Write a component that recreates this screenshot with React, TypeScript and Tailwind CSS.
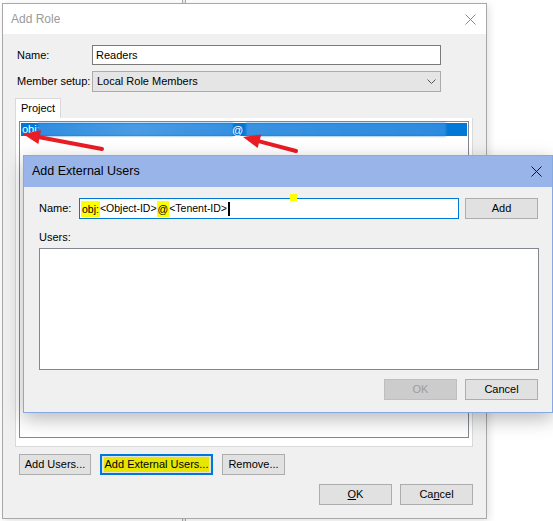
import { ReactNode } from "react";

const font = { fontFamily: '"Liberation Sans", Arial, sans-serif' };

function WinButton({ children, className = "", disabled = false }: { children: ReactNode; className?: string; disabled?: boolean }) {
  return (
    <div
      className={`h-[21px] flex items-center justify-center border text-[11px] ${
        disabled ? "bg-[#cccccc] border-[#bfbfbf] text-[#9d9d9d]" : "bg-[#e1e1e1] border-[#adadad] text-black"
      } ${className}`}
    >
      {children}
    </div>
  );
}

function CloseX({ color }: { color: string }) {
  return (
    <svg width="11" height="11" viewBox="0 0 11 11">
      <path d="M0.5 0.5 L10.5 10.5 M10.5 0.5 L0.5 10.5" stroke={color} strokeWidth="1" />
    </svg>
  );
}

function Arrow({ x1, y1, x2, y2 }: { x1: number; y1: number; x2: number; y2: number }) {
  const a = Math.atan2(y2 - y1, x2 - x1);
  const len = 17;
  const w = 7;
  const bx = x2 - Math.cos(a) * len;
  const by = y2 - Math.sin(a) * len;
  const p1 = `${bx + Math.sin(a) * w},${by - Math.cos(a) * w}`;
  const p2 = `${bx - Math.sin(a) * w},${by + Math.cos(a) * w}`;
  return (
    <g>
      <line x1={x1} y1={y1} x2={bx} y2={by} stroke="#ea1c24" strokeWidth="4" strokeLinecap="round" />
      <polygon points={`${x2},${y2} ${p1} ${p2}`} fill="#ea1c24" />
    </g>
  );
}

export default function App() {
  return (
    <div className="relative w-[553px] h-[521px] bg-white overflow-hidden" style={font}>
      {/* window edge behind */}
      <div className="absolute left-[182px] top-0 h-full w-[4px] border-l border-r border-[#a9a9a9] bg-[#f0f0f0]" />

      {/* Add Role dialog */}
      <div className="absolute left-[2px] top-[3px] w-[485px] h-[516px] border border-[#a8a8a8] bg-[#f0f0f0] flex flex-col shadow-[2px_2px_8px_rgba(0,0,0,0.12)]">
        <div className="h-[30px] bg-white flex items-center justify-between pl-[8px] pr-[10px] shrink-0">
          <span className="text-[12px] text-[#9a9a9a]">Add Role</span>
          <CloseX color="#8a8a8a" />
        </div>

        <div className="flex flex-col pl-[12px] pr-[13px] pt-[11px]">
          <div className="grid grid-cols-[77px_349px] gap-y-[6px] items-center">
            <span className="text-[11px] pl-[2px]">Name:</span>
            <div className="h-[20px] bg-white border border-[#7a7a7a] flex items-center px-[3px] text-[11px]">Readers</div>
            <span className="text-[11px] pl-[2px]">Member setup:</span>
            <div className="h-[21px] bg-[#e5e5e5] border border-[#acacac] flex items-center justify-between px-[4px] text-[11px]">
              <span>Local Role Members</span>
              <svg width="9" height="6" viewBox="0 0 9 6">
                <path d="M0.5 0.5 L4.5 4.5 L8.5 0.5" stroke="#555" fill="none" strokeWidth="1" />
              </svg>
            </div>
          </div>

          <div className="mt-[6px] flex">
            <div className="h-[20px] w-[46px] bg-white border border-b-0 border-[#d9d9d9] flex items-center justify-center text-[11px]">
              Project
            </div>
          </div>
          <div className="h-[329px] w-[458px] bg-white border border-[#d9d9d9] border-t-0 px-[3px] pt-[3px] pb-[8px] flex">
            <div className="flex-1 border border-[#828790] bg-white p-[1px]">
              <div className="h-[13px] bg-[#0078d7] flex items-center text-white text-[11px] relative">
                <span className="pl-[1px]">obj:</span>
                <div className="absolute left-[17px] top-0 h-full w-[195px] bg-gradient-to-r from-[#2f8de0] via-[#4a9be4] to-[#3590e1] blur-[1px]" />
                <span className="absolute left-[211px] top-[-1px]">@</span>
                <div className="absolute left-[225px] top-0 h-full w-[200px] bg-gradient-to-r from-[#3a92e1] to-[#2d8bdf] blur-[1px]" />
              </div>
            </div>
          </div>

          <div className="flex mt-[7px] pl-[4px] gap-[9px]">
            <WinButton className="w-[72px]">Add Users...</WinButton>
            <div className="w-[113px] h-[21px] border-2 border-[#0078d7] bg-[#e1e1e1] flex items-center justify-center">
              <span className="bg-[#e6e600] px-[1px] text-[11px] leading-[15px]">Add External Users...</span>
            </div>
            <WinButton className="w-[63px]">Remove...</WinButton>
          </div>

          <div className="flex justify-end mt-[9px] gap-[8px]">
            <WinButton className="w-[73px]"><span><span className="underline">O</span>K</span></WinButton>
            <WinButton className="w-[73px]"><span>Ca<span className="underline">n</span>cel</span></WinButton>
          </div>
        </div>
      </div>

      {/* arrows */}
      <svg className="absolute left-0 top-0" width="553" height="521">
        <Arrow x1={102} y1={149} x2={23} y2={134} />
        <Arrow x1={296} y1={151} x2={243} y2={137} />
      </svg>

      {/* Add External Users dialog */}
      <div className="absolute left-[23px] top-[155px] w-[530px] h-[258px] border border-[#86a8e3] bg-[#f0f0f0] flex flex-col shadow-[0_6px_18px_rgba(0,0,0,0.28)]">
        <div className="h-[31px] bg-[#99b4e8] flex items-center justify-between pl-[8px] pr-[10px] shrink-0">
          <span className="text-[12.5px] text-black">Add External Users</span>
          <CloseX color="#111" />
        </div>
        <div className="relative flex flex-col pl-[15px] pr-[13px] pt-[11px]">
          <div className="absolute left-[266px] top-[7px] w-[7px] h-[7px] bg-[#ffff00]" />
          <div className="flex items-center">
            <span className="w-[40px] text-[11px]">Name:</span>
            <div className="w-[380px] h-[21px] bg-white border border-[#0078d7] flex items-center pl-[1px] text-[10.5px]">
              <span className="bg-[#ffff00] px-[1px] leading-[16px]">obj:</span>
              <span>&lt;Object-ID&gt;</span>
              <span className="bg-[#ffff00] px-[1px] leading-[16px]">@</span>
              <span>&lt;Tenent-ID&gt;</span>
              <span className="w-[2px] h-[14px] bg-black ml-[1px]" />
            </div>
            <WinButton className="ml-[6px] w-[73px]">Add</WinButton>
          </div>
          <span className="text-[11px] mt-[10px]">Users:</span>
          <div className="mt-[2px] w-[500px] h-[122px] bg-white border border-[#828790]" />
          <div className="flex justify-end mt-[9px] gap-[8px] mr-[1px]">
            <WinButton disabled className="w-[73px]">OK</WinButton>
            <WinButton className="w-[73px]">Cancel</WinButton>
          </div>
        </div>
      </div>
    </div>
  );
}
